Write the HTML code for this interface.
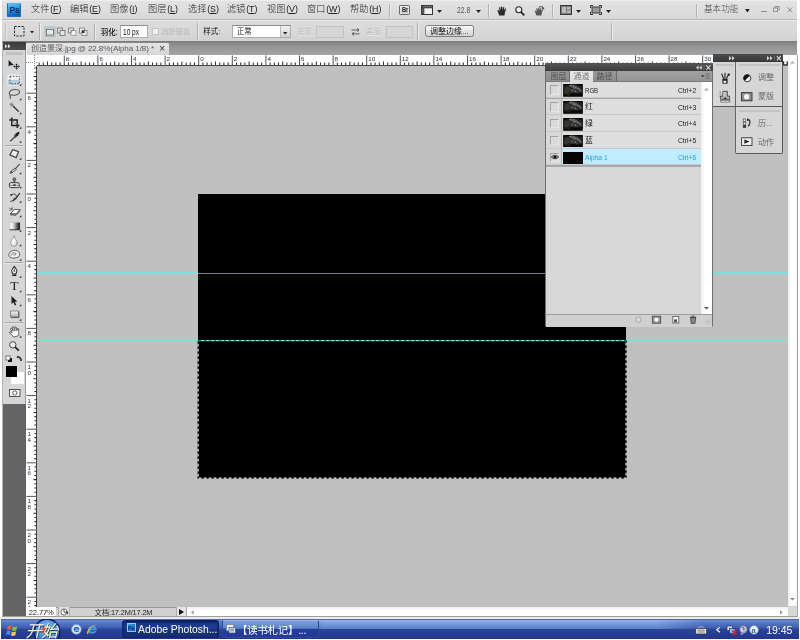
<!DOCTYPE html><html lang="zh"><head><meta charset="utf-8"><title>Adobe Photoshop</title><style>
*{margin:0;padding:0;box-sizing:border-box}
html,body{width:800px;height:640px;overflow:hidden;background:#fff}
body{position:relative;font-family:"Liberation Sans","Noto Sans CJK SC",sans-serif;font-size:10px;color:#222}
.a{position:absolute}
.t{position:absolute;white-space:nowrap;line-height:1}
.sep{position:absolute;width:2px;border-left:1px solid #b0b0b0;border-right:1px solid #ececec}
svg{position:absolute;overflow:visible}
</style></head><body><div id="root" style="position:absolute;left:0;top:0;width:800px;height:640px;will-change:transform">
<div class="a" style="left:2px;top:0px;width:795px;height:618px;background:#d4d4d4"></div>
<div class="a" id="menubar" style="left:2px;top:0px;width:795px;height:20px;background:linear-gradient(#f4f4f4 0,#e2e2e2 8%,#dedede 50%,#d8d8d8);border-bottom:1px solid #b8b8b8"></div>
<div class="a" id="optbar" style="left:2px;top:20px;width:795px;height:22px;background:linear-gradient(#dcdcdc,#d9d9d9 50%,#d2d2d2);border-top:1px solid #ececec;border-bottom:1px solid #7c7c7c"></div>
<div class="a" id="tabbar" style="left:2px;top:42px;width:795px;height:13px;background:linear-gradient(#848484,#969696 40%,#a4a4a4)"></div>
<div class="a" id="canvas" style="left:26px;top:55px;width:762px;height:552px;background:#c0c0c0"></div>
<div class="a" style="left:7px;top:3px;width:14.2px;height:14.2px;background:linear-gradient(165deg,#62c4fb,#2596ea 45%,#0f6cc8 75%,#0a56ae);border:1px solid #1a6cc0;border-top-color:#58b4f0;border-radius:1px"></div>
<div class="t" style="left:9.6px;top:6.2px;font-size:8.6px;color:#0a2858;font-weight:bold;letter-spacing:-0.3px">Ps</div>
<div class="t" style="left:31px;top:5px;font-size:9.2px;color:#222;font-weight:300">文件<span style="font-size:8.8px;letter-spacing:0;margin-left:0.8px;position:relative;top:0.2px">(<u>F</u>)</span></div>
<div class="t" style="left:70px;top:5px;font-size:9.2px;color:#222;font-weight:300">编辑<span style="font-size:8.8px;letter-spacing:0;margin-left:0.8px;position:relative;top:0.2px">(<u>E</u>)</span></div>
<div class="t" style="left:110px;top:5px;font-size:9.2px;color:#222;font-weight:300">图像<span style="font-size:8.8px;letter-spacing:0;margin-left:0.8px;position:relative;top:0.2px">(<u>I</u>)</span></div>
<div class="t" style="left:148px;top:5px;font-size:9.2px;color:#222;font-weight:300">图层<span style="font-size:8.8px;letter-spacing:0;margin-left:0.8px;position:relative;top:0.2px">(<u>L</u>)</span></div>
<div class="t" style="left:188px;top:5px;font-size:9.2px;color:#222;font-weight:300">选择<span style="font-size:8.8px;letter-spacing:0;margin-left:0.8px;position:relative;top:0.2px">(<u>S</u>)</span></div>
<div class="t" style="left:227px;top:5px;font-size:9.2px;color:#222;font-weight:300">滤镜<span style="font-size:8.8px;letter-spacing:0;margin-left:0.8px;position:relative;top:0.2px">(<u>T</u>)</span></div>
<div class="t" style="left:267px;top:5px;font-size:9.2px;color:#222;font-weight:300">视图<span style="font-size:8.8px;letter-spacing:0;margin-left:0.8px;position:relative;top:0.2px">(<u>V</u>)</span></div>
<div class="t" style="left:307px;top:5px;font-size:9.2px;color:#222;font-weight:300">窗口<span style="font-size:8.8px;letter-spacing:0;margin-left:0.8px;position:relative;top:0.2px">(<u>W</u>)</span></div>
<div class="t" style="left:350px;top:5px;font-size:9.2px;color:#222;font-weight:300">帮助<span style="font-size:8.8px;letter-spacing:0;margin-left:0.8px;position:relative;top:0.2px">(<u>H</u>)</span></div>
<div class="sep" style="left:389px;top:4px;height:13px"></div>
<div class="a" style="left:399.2px;top:5px;width:10.6px;height:9.8px;border:1px solid #6a6a6a;background:linear-gradient(#e6e6e6,#c2c2c2);border-radius:1.2px;box-shadow:inset 0 0 0 0.6px #f2f2f2"></div>
<div class="t" style="left:401.6px;top:7.3px;font-size:6.4px;color:#2a2a2a;font-weight:bold;letter-spacing:-0.3px;transform:scaleX(0.9);transform-origin:0 0">Br</div>
<svg style="left:421px;top:5px" width="12" height="10"><rect x="0.5" y="0.5" width="11" height="9" fill="#f0f0f0" stroke="#333"/><rect x="0.5" y="0.5" width="11" height="2.8" fill="#444"/><rect x="0.5" y="3" width="2.8" height="6.5" fill="#444"/><path d="M2.5,1.6h8.5" stroke="#aaa" stroke-width="0.8" stroke-dasharray="1,0.8"/><path d="M1.8,4v5" stroke="#aaa" stroke-width="0.8" stroke-dasharray="0.8,0.8"/></svg>
<svg style="left:437px;top:9.5px" width="5" height="3"><polygon points="0,0 5,0 2.5,3" fill="#222"/></svg>
<div class="t" style="left:457px;top:6px;font-size:8.5px;color:#555;transform:scaleX(0.8);transform-origin:0 0">22.8</div>
<svg style="left:476px;top:9.5px" width="5" height="3"><polygon points="0,0 5,0 2.5,3" fill="#222"/></svg>
<div class="sep" style="left:488px;top:4px;height:13px"></div>
<svg style="left:497px;top:5.5px" width="10" height="10" viewBox="0 0 10 10"><path d="M2.2,9.5 L1,6 L0.3,4.2 L1.2,3.8 L2.4,5.6 L2.2,1.2 L3.2,1 L3.8,4.2 L4.2,0.4 L5.3,0.4 L5.5,4.2 L6.3,0.9 L7.3,1.1 L7,4.6 L8.3,2.4 L9.2,2.8 L8,6.5 L7.4,9.5 Z" fill="#2a2a2a"/></svg>
<svg style="left:515px;top:5.5px" width="10" height="10" viewBox="0 0 10 10"><circle cx="3.8" cy="3.8" r="3" fill="#f0f0f0" stroke="#2a2a2a" stroke-width="1.1"/><path d="M6,6 L9.3,9.3" stroke="#2a2a2a" stroke-width="1.8"/></svg>
<svg style="left:534px;top:4.5px" width="11" height="11" viewBox="0 0 11 11"><path d="M2.5,10.5 L1.2,7.3 L0.6,5.8 L1.4,5.4 L2.5,6.8 L2.4,3.2 L3.3,3 L3.9,5.6 L4.4,2.6 L5.4,2.6 L5.6,5.6 L6.3,3.2 L7.2,3.4 L7,6 L8.1,4.6 L8.9,5 L7.9,7.8 L7.4,10.5 Z" fill="#555"/><path d="M5,1.8 A4,4 0 0 1 9.6,3.6" stroke="#555" stroke-width="1" fill="none"/><polygon points="8.6,0.8 10.6,4.6 7.6,4.2" fill="#555"/></svg>
<div class="sep" style="left:552px;top:4px;height:13px"></div>
<svg style="left:560px;top:5px" width="12" height="10"><rect x="0.5" y="0.5" width="11" height="9" fill="#777" stroke="#3a3a3a"/><rect x="2" y="2" width="4" height="6" fill="#bbb"/><rect x="7" y="2" width="3.5" height="2.5" fill="#bbb"/><rect x="7" y="5.5" width="3.5" height="2.5" fill="#bbb"/></svg>
<svg style="left:576px;top:9.5px" width="5" height="3"><polygon points="0,0 5,0 2.5,3" fill="#222"/></svg>
<svg style="left:590px;top:5px" width="12" height="10"><rect x="2" y="2" width="8" height="6" fill="#999" stroke="#3a3a3a"/><path d="M0.5,3 V0.5 H3 M9,0.5 H11.5 V3 M11.5,7 V9.5 H9 M3,9.5 H0.5 V7" stroke="#333" fill="none"/></svg>
<svg style="left:606px;top:9.5px" width="5" height="3"><polygon points="0,0 5,0 2.5,3" fill="#222"/></svg>
<div class="sep" style="left:696px;top:4px;height:13px"></div>
<div class="t" style="left:703.6px;top:5.3px;font-size:9px;color:#4a4a4a;transform:scaleX(0.955);transform-origin:0 0;font-weight:300">基本功能</div>
<svg style="left:745px;top:9.3px" width="4.8" height="3.4"><polygon points="0,0 4.8,0 2.4,3.4" fill="#222"/></svg>
<div class="a" style="left:761px;top:11px;width:6px;height:1.4px;background:#8a8a8a"></div>
<svg style="left:773.4px;top:6.4px" width="7" height="6"><rect x="0.4" y="2" width="4.2" height="3.4" fill="none" stroke="#8a8a8a" stroke-width="0.9"/><path d="M1.8,1.8 V0.5 H6.2 V3.8 H4.8" fill="none" stroke="#8a8a8a" stroke-width="0.9"/></svg>
<svg style="left:787.3px;top:7px" width="6" height="6"><path d="M0.4,0.4 L5.4,5.4 M5.4,0.4 L0.4,5.4" stroke="#8e8e8e" stroke-width="1"/></svg>
<div class="a" style="left:5.3px;top:23px;width:2px;height:17px;background:#e4e4e4;border-left:0.8px solid #c4c4c4"></div>
<svg style="left:14px;top:26px" width="11" height="11"><rect x="0.5" y="0.5" width="9.5" height="9.5" fill="none" stroke="#222" stroke-width="1" stroke-dasharray="2.2,1.3"/></svg>
<svg style="left:30px;top:30.5px" width="4" height="2.5"><polygon points="0,0 4,0 2.0,2.5" fill="#222"/></svg>
<div class="sep" style="left:39px;top:23px;height:17px"></div>
<svg style="left:45px;top:26.5px" width="44" height="10"><rect x="0" y="0" width="10" height="9.5" fill="#b9d1dc" stroke="#8fa9b5" stroke-width="0.6"/><rect x="1.5" y="2.5" width="7" height="5.5" fill="#e9e9e9" stroke="#6a6a6a" stroke-width="0.8"/><rect x="12.5" y="1" width="5" height="5" fill="#e4e4e4" stroke="#6a6a6a" stroke-width="0.8"/><rect x="15" y="3.5" width="5" height="5" fill="#e4e4e4" stroke="#6a6a6a" stroke-width="0.8"/><rect x="26" y="3.5" width="5" height="5" fill="#f4f4f4" stroke="#999" stroke-width="0.8"/><path d="M23.5,6 V1 H28.5 V3.5 H26 V6 Z" fill="#e4e4e4" stroke="#6a6a6a" stroke-width="0.8"/><rect x="34.5" y="1" width="5" height="5" fill="#eee" stroke="#777" stroke-width="0.8"/><rect x="37" y="3.5" width="5" height="5" fill="#eee" stroke="#777" stroke-width="0.8"/><rect x="37" y="3.5" width="2.5" height="2.5" fill="#333"/></svg>
<div class="sep" style="left:94px;top:23px;height:17px"></div>
<div class="t" style="left:100.7px;top:27.5px;font-size:7.5px;color:#111;font-weight:500;transform:scaleY(1.12);transform-origin:0 0">羽化:</div>
<div class="a" style="left:119.5px;top:25.3px;width:28px;height:12.4px;background:#fff;border:1px solid #adadad;border-top-color:#8c8c8c"></div>
<div class="t" style="left:122.8px;top:28px;font-size:8.4px;color:#111;transform:scaleX(0.78);transform-origin:0 0">10 px</div>
<div class="a" style="left:152px;top:28.3px;width:7px;height:7px;background:#efefef;border:1px solid #c4c4c4"></div>
<div class="t" style="left:161px;top:28px;font-size:7.3px;color:#b8b8b8;">消除锯齿</div>
<div class="sep" style="left:197px;top:23px;height:17px"></div>
<div class="t" style="left:203.2px;top:28px;font-size:7.5px;color:#111;transform:scaleY(1.08);transform-origin:0 0">样式:</div>
<div class="a" style="left:232.4px;top:25.4px;width:59px;height:12.5px;background:#fff;border:1px solid #adadad;border-top-color:#8c8c8c"></div>
<div class="t" style="left:237px;top:28.2px;font-size:7.3px;color:#111;transform:scaleY(1.06);transform-origin:0 0">正常</div>
<div class="a" style="left:280px;top:26.4px;width:10.4px;height:10.5px;background:linear-gradient(#f4f4f4,#d0d0d0);border-left:1px solid #bbb"></div>
<svg style="left:283px;top:31.5px" width="4.4" height="2.6"><polygon points="0,0 4.4,0 2.2,2.6" fill="#222"/></svg>
<div class="t" style="left:297.2px;top:28px;font-size:7.4px;color:#bcbcbc;text-shadow:0.5px 0.5px 0 #eee">宽度:</div>
<div class="a" style="left:316px;top:25.5px;width:27.5px;height:12.2px;background:#d6d6d6;border:1px solid #c2c2c2"></div>
<svg style="left:350.5px;top:27.5px" width="9" height="8"><path d="M0.5,2 H8 M6,0.3 L8,2 L6,3.7 M8.5,5.8 H1 M3,4.1 L1,5.8 L3,7.5" stroke="#555" fill="none" stroke-width="0.9"/></svg>
<div class="t" style="left:366.3px;top:28px;font-size:7.4px;color:#bcbcbc;text-shadow:0.5px 0.5px 0 #eee">高度:</div>
<div class="a" style="left:385.6px;top:25.5px;width:27px;height:12.2px;background:#d6d6d6;border:1px solid #c2c2c2"></div>
<div class="sep" style="left:417px;top:23px;height:17px"></div>
<div class="a" style="left:424.5px;top:25px;width:49.5px;height:11.5px;background:linear-gradient(#fbfbfb,#e4e4e4 50%,#d2d2d2);border:1px solid #7e7e7e;border-radius:2.5px"></div>
<div class="t" style="left:430px;top:27.6px;font-size:8px;color:#111;">调整边缘...</div>
<div class="sep" style="left:611px;top:23px;height:17px"></div>
<div class="a" style="left:26px;top:43px;width:143px;height:12px;background:linear-gradient(#e4e4e4,#d6d6d6);border-radius:1px 1px 0 0;border-left:1px solid #eee"></div>
<div class="t" style="left:31px;top:44.8px;font-size:8.05px;color:#5a5a5a;letter-spacing:-0.08px">创造景深.jpg @ 22.8%(Alpha 1/8) *</div>
<div class="t" style="left:159.3px;top:43.6px;font-size:10px;color:#333;">×</div>
<div class="a" style="left:26px;top:55px;width:762px;height:10.6px;background:#fff;border-bottom:1.3px solid #444"></div>
<div class="a" style="left:26px;top:55px;width:11.2px;height:552px;background:#fff;border-right:1.3px solid #444"></div>
<div class="a" style="left:26px;top:55px;width:11px;height:10.5px;background:#fff"></div>
<div class="a" style="left:26px;top:62px;width:11px;height:1px;background:repeating-linear-gradient(90deg,#888 0 1px,#fff 1px 2px)"></div>
<div class="a" style="left:34px;top:55px;width:1px;height:10.5px;background:repeating-linear-gradient(#888 0 1px,#fff 1px 2px)"></div>
<svg style="left:0;top:0" width="800" height="640" font-family="Liberation Sans, sans-serif" font-size="6.2" fill="#2a3246"><path d="M64.3,55.5V65M97.9,55.5V65M131.5,55.5V65M165.1,55.5V65M198.7,55.5V65M232.3,55.5V65M265.9,55.5V65M299.5,55.5V65M333.1,55.5V65M366.7,55.5V65M400.3,55.5V65M433.9,55.5V65M467.5,55.5V65M501.1,55.5V65M534.7,55.5V65M568.3,55.5V65M601.9,55.5V65M635.5,55.5V65M669.1,55.5V65M702.7,55.5V65M26.5,93.2H37M26.5,126.8H37M26.5,160.4H37M26.5,194.0H37M26.5,227.6H37M26.5,261.2H37M26.5,294.8H37M26.5,328.4H37M26.5,362.0H37M26.5,395.6H37M26.5,429.2H37M26.5,462.8H37M26.5,496.4H37M26.5,530.0H37M26.5,563.6H37M26.5,597.2H37" stroke="#555" stroke-width="1" fill="none"/><path d="M39.1,62.4V65M43.3,62.4V65M47.5,61.4V65M51.7,62.4V65M55.9,62.4V65M60.1,62.4V65M68.5,62.4V65M72.7,62.4V65M76.9,62.4V65M81.1,61.4V65M85.3,62.4V65M89.5,62.4V65M93.7,62.4V65M102.1,62.4V65M106.3,62.4V65M110.5,62.4V65M114.7,61.4V65M118.9,62.4V65M123.1,62.4V65M127.3,62.4V65M135.7,62.4V65M139.9,62.4V65M144.1,62.4V65M148.3,61.4V65M152.5,62.4V65M156.7,62.4V65M160.9,62.4V65M169.3,62.4V65M173.5,62.4V65M177.7,62.4V65M181.9,61.4V65M186.1,62.4V65M190.3,62.4V65M194.5,62.4V65M202.9,62.4V65M207.1,62.4V65M211.3,62.4V65M215.5,61.4V65M219.7,62.4V65M223.9,62.4V65M228.1,62.4V65M236.5,62.4V65M240.7,62.4V65M244.9,62.4V65M249.1,61.4V65M253.3,62.4V65M257.5,62.4V65M261.7,62.4V65M270.1,62.4V65M274.3,62.4V65M278.5,62.4V65M282.7,61.4V65M286.9,62.4V65M291.1,62.4V65M295.3,62.4V65M303.7,62.4V65M307.9,62.4V65M312.1,62.4V65M316.3,61.4V65M320.5,62.4V65M324.7,62.4V65M328.9,62.4V65M337.3,62.4V65M341.5,62.4V65M345.7,62.4V65M349.9,61.4V65M354.1,62.4V65M358.3,62.4V65M362.5,62.4V65M370.9,62.4V65M375.1,62.4V65M379.3,62.4V65M383.5,61.4V65M387.7,62.4V65M391.9,62.4V65M396.1,62.4V65M404.5,62.4V65M408.7,62.4V65M412.9,62.4V65M417.1,61.4V65M421.3,62.4V65M425.5,62.4V65M429.7,62.4V65M438.1,62.4V65M442.3,62.4V65M446.5,62.4V65M450.7,61.4V65M454.9,62.4V65M459.1,62.4V65M463.3,62.4V65M471.7,62.4V65M475.9,62.4V65M480.1,62.4V65M484.3,61.4V65M488.5,62.4V65M492.7,62.4V65M496.9,62.4V65M505.3,62.4V65M509.5,62.4V65M513.7,62.4V65M517.9,61.4V65M522.1,62.4V65M526.3,62.4V65M530.5,62.4V65M538.9,62.4V65M543.1,62.4V65M547.3,62.4V65M551.5,61.4V65M555.7,62.4V65M559.9,62.4V65M564.1,62.4V65M572.5,62.4V65M576.7,62.4V65M580.9,62.4V65M585.1,61.4V65M589.3,62.4V65M593.5,62.4V65M597.7,62.4V65M606.1,62.4V65M610.3,62.4V65M614.5,62.4V65M618.7,61.4V65M622.9,62.4V65M627.1,62.4V65M631.3,62.4V65M639.7,62.4V65M643.9,62.4V65M648.1,62.4V65M652.3,61.4V65M656.5,62.4V65M660.7,62.4V65M664.9,62.4V65M673.3,62.4V65M677.5,62.4V65M681.7,62.4V65M685.9,61.4V65M690.1,62.4V65M694.3,62.4V65M698.5,62.4V65M706.9,62.4V65M711.1,62.4V65M34.4,68.0H37M34.4,72.2H37M33.4,76.4H37M34.4,80.6H37M34.4,84.8H37M34.4,89.0H37M34.4,97.4H37M34.4,101.6H37M34.4,105.8H37M33.4,110.0H37M34.4,114.2H37M34.4,118.4H37M34.4,122.6H37M34.4,131.0H37M34.4,135.2H37M34.4,139.4H37M33.4,143.6H37M34.4,147.8H37M34.4,152.0H37M34.4,156.2H37M34.4,164.6H37M34.4,168.8H37M34.4,173.0H37M33.4,177.2H37M34.4,181.4H37M34.4,185.6H37M34.4,189.8H37M34.4,198.2H37M34.4,202.4H37M34.4,206.6H37M33.4,210.8H37M34.4,215.0H37M34.4,219.2H37M34.4,223.4H37M34.4,231.8H37M34.4,236.0H37M34.4,240.2H37M33.4,244.4H37M34.4,248.6H37M34.4,252.8H37M34.4,257.0H37M34.4,265.4H37M34.4,269.6H37M34.4,273.8H37M33.4,278.0H37M34.4,282.2H37M34.4,286.4H37M34.4,290.6H37M34.4,299.0H37M34.4,303.2H37M34.4,307.4H37M33.4,311.6H37M34.4,315.8H37M34.4,320.0H37M34.4,324.2H37M34.4,332.6H37M34.4,336.8H37M34.4,341.0H37M33.4,345.2H37M34.4,349.4H37M34.4,353.6H37M34.4,357.8H37M34.4,366.2H37M34.4,370.4H37M34.4,374.6H37M33.4,378.8H37M34.4,383.0H37M34.4,387.2H37M34.4,391.4H37M34.4,399.8H37M34.4,404.0H37M34.4,408.2H37M33.4,412.4H37M34.4,416.6H37M34.4,420.8H37M34.4,425.0H37M34.4,433.4H37M34.4,437.6H37M34.4,441.8H37M33.4,446.0H37M34.4,450.2H37M34.4,454.4H37M34.4,458.6H37M34.4,467.0H37M34.4,471.2H37M34.4,475.4H37M33.4,479.6H37M34.4,483.8H37M34.4,488.0H37M34.4,492.2H37M34.4,500.6H37M34.4,504.8H37M34.4,509.0H37M33.4,513.2H37M34.4,517.4H37M34.4,521.6H37M34.4,525.8H37M34.4,534.2H37M34.4,538.4H37M34.4,542.6H37M33.4,546.8H37M34.4,551.0H37M34.4,555.2H37M34.4,559.4H37M34.4,567.8H37M34.4,572.0H37M34.4,576.2H37M33.4,580.4H37M34.4,584.6H37M34.4,588.8H37M34.4,593.0H37M34.4,601.4H37M34.4,605.6H37" stroke="#303030" stroke-width="1.05" fill="none"/><text x="65.8" y="61.3">8</text><text x="99.4" y="61.3">6</text><text x="133.0" y="61.3">4</text><text x="166.6" y="61.3">2</text><text x="200.2" y="61.3">0</text><text x="233.8" y="61.3">2</text><text x="267.4" y="61.3">4</text><text x="301.0" y="61.3">6</text><text x="334.6" y="61.3">8</text><text x="368.2" y="61.3">10</text><text x="401.8" y="61.3">12</text><text x="435.4" y="61.3">14</text><text x="469.0" y="61.3">16</text><text x="502.6" y="61.3">18</text><text x="536.2" y="61.3">20</text><text x="569.8" y="61.3">22</text><text x="603.4" y="61.3">24</text><text x="637.0" y="61.3">26</text><text x="670.6" y="61.3">28</text><text x="704.2" y="61.3">30</text><text x="27.4" y="100.2">6</text><text x="27.4" y="133.8">4</text><text x="27.4" y="167.4">2</text><text x="27.4" y="201.0">0</text><text x="27.4" y="234.6">2</text><text x="27.4" y="268.2">4</text><text x="27.4" y="301.8">6</text><text x="27.4" y="335.4">8</text><text x="27.4" y="369.0">1</text><text x="27.4" y="374.6">0</text><text x="27.4" y="402.6">1</text><text x="27.4" y="408.2">2</text><text x="27.4" y="436.2">1</text><text x="27.4" y="441.8">4</text><text x="27.4" y="469.8">1</text><text x="27.4" y="475.4">6</text><text x="27.4" y="503.4">1</text><text x="27.4" y="509.0">8</text><text x="27.4" y="537.0">2</text><text x="27.4" y="542.6">0</text><text x="27.4" y="570.6">2</text><text x="27.4" y="576.2">2</text><text x="27.4" y="604.2">2</text><text x="27.4" y="609.8">4</text></svg>
<div class="a" id="img" style="left:198px;top:194px;width:428px;height:284px;background:#000"></div>
<div class="a" style="left:37px;top:272.3px;width:751px;height:1.4px;background:#7fdede"></div>
<div class="a" style="left:198px;top:272.3px;width:428px;height:1.4px;background:#000"></div>
<div class="a" style="left:198px;top:272.5px;width:428px;height:1px;background:#4a9696"></div>
<div class="a" style="left:37px;top:340px;width:751px;height:1.4px;background:#7fdede"></div>
<svg style="left:0;top:0" width="800" height="640"><rect x="198.1" y="340.7" width="428" height="137.4" fill="none" stroke="#000" stroke-width="1.2"/><rect x="198.1" y="340.7" width="428" height="137.4" fill="none" stroke="#ececec" stroke-width="1.2" stroke-dasharray="2.8,2.2"/><path d="M198.1,340.7H626.1" stroke="#000" stroke-width="1.6"/><path d="M198.1,340.6H626.1" stroke="#3f8888" stroke-width="1"/><path d="M201,340.6H626.1" stroke="#a4f0f0" stroke-width="1" stroke-dasharray="3,2"/></svg>
<div class="a" style="left:2px;top:42px;width:1px;height:576px;background:#b4b4b4"></div>
<div class="a" style="left:3px;top:42px;width:23px;height:8px;background:linear-gradient(#3a3a3a,#4c4c4c)"></div>
<svg style="left:5px;top:44px" width="6" height="5"><path d="M0,0 L2.5,2.2 L0,4.4Z M3,0 L5.5,2.2 L3,4.4Z" fill="#d8d8d8"/></svg>
<div class="a" style="left:3px;top:50px;width:23px;height:354px;background:#d6d6d6;border-right:1px solid #9a9a9a"></div>
<div class="a" style="left:3px;top:404px;width:23px;height:214px;background:#646464"></div>
<div class="a" style="left:6px;top:52px;width:17px;height:2.5px;background:#c2c2c2"></div>
<div class="a" style="left:5px;top:144.8px;width:18px;height:1px;background:#a8a8a8;box-shadow:0 1px 0 #e4e4e4"></div>
<div class="a" style="left:5px;top:262.2px;width:18px;height:1px;background:#a8a8a8;box-shadow:0 1px 0 #e4e4e4"></div>
<div class="a" style="left:5px;top:322.4px;width:18px;height:1px;background:#a8a8a8;box-shadow:0 1px 0 #e4e4e4"></div>
<div class="a" style="left:7.1px;top:74px;width:14px;height:11.6px;background:linear-gradient(#f6f7f8,#eef1f3 46%,#b2ccd8 50%,#bdd4de);border:0.5px solid #dfe6ea"></div>
<svg style="left:0;top:0" width="40" height="420"><polygon points="21.3,83.7 21.3,85.7 19.3,85.7" fill="#111"/><polygon points="21.3,98.2 21.3,100.2 19.3,100.2" fill="#111"/><polygon points="21.3,112.2 21.3,114.2 19.3,114.2" fill="#111"/><polygon points="21.3,126.7 21.3,128.7 19.3,128.7" fill="#111"/><polygon points="21.3,140.7 21.3,142.7 19.3,142.7" fill="#111"/><polygon points="21.3,157.7 21.3,159.7 19.3,159.7" fill="#111"/><polygon points="21.3,172.2 21.3,174.2 19.3,174.2" fill="#111"/><polygon points="21.3,186.2 21.3,188.2 19.3,188.2" fill="#111"/><polygon points="21.3,200.7 21.3,202.7 19.3,202.7" fill="#111"/><polygon points="21.3,215.2 21.3,217.2 19.3,217.2" fill="#111"/><polygon points="21.3,229.7 21.3,231.7 19.3,231.7" fill="#111"/><polygon points="21.3,244.2 21.3,246.2 19.3,246.2" fill="#111"/><polygon points="21.3,258.7 21.3,260.7 19.3,260.7" fill="#111"/><polygon points="21.3,275.7 21.3,277.7 19.3,277.7" fill="#111"/><polygon points="21.3,290.2 21.3,292.2 19.3,292.2" fill="#111"/><polygon points="21.3,304.2 21.3,306.2 19.3,306.2" fill="#111"/><polygon points="21.3,318.7 21.3,320.7 19.3,320.7" fill="#111"/><polygon points="21.3,335.7 21.3,337.7 19.3,337.7" fill="#111"/><path d="M8.6,60 L8.6,66.6 L10.3,65.2 L14,65.2 Z" fill="#1e1e1e"/><path d="M16.6,64.6 v4 M14.6,66.6 h4" stroke="#1e1e1e" stroke-width="0.9"/><path d="M16.6,63.4 l1.3,1.5h-2.6z M16.6,69.8 l1.3,-1.5h-2.6z M13.4,66.6 l1.5,-1.3v2.6z M19.8,66.6 l-1.5,-1.3v2.6z" fill="#1e1e1e"/><rect x="10" y="76.3" width="9.4" height="7.4" fill="none" stroke="#3a4650" stroke-width="0.9" stroke-dasharray="1.6,1.3"/><path d="M9.5,94.5 C8.5,91 12,89.3 15.5,89.5 C19,89.7 20.3,91.3 19.3,93 C18.3,94.8 14.5,95.8 11.5,95 C9.7,94.6 9.2,95.8 10.3,96.6 C11,97.2 10.3,98.2 9.6,98.4" fill="none" stroke="#555" stroke-width="1.1"/><path d="M13,106 L18.7,111.7" stroke="#1e1e1e" stroke-width="1.2"/><path d="M11.7,102.4v4.4 M9.5,104.6h4.4 M10.1,103l3.2,3.2 M13.3,103l-3.2,3.2" stroke="#6a6a6a" stroke-width="0.6"/><path d="M11.8,117.5 V125.5 H19.5 M9.3,120 H17.2 V128" fill="none" stroke="#1e1e1e" stroke-width="1.4"/><path d="M10,118.4 L18.8,127" stroke="#555" stroke-width="0.6"/><path d="M10.2,141.4 L15,136.6" stroke="#333" stroke-width="1.2"/><path d="M14.6,137 L17.4,134.2" stroke="#444" stroke-width="2.6"/><path d="M15.6,133.6 L17.9,135.9" stroke="#1e1e1e" stroke-width="1.2"/><path d="M17,134.4 L18.4,133" stroke="#1e1e1e" stroke-width="2.2" stroke-linecap="round"/><path d="M12.7,149.7 L18.5,151.7 L16.2,157.7 L9.9,154.9 Z" fill="#f2f2f2" stroke="#4a4a4a" stroke-width="1.3" stroke-linejoin="round"/><path d="M19.6,164 L15.2,169" stroke="#3a3a3a" stroke-width="1.1"/><path d="M15.2,168.2 L16.3,169.5 L12.2,172.6 L10,173.2 L11.4,170.8 Z" fill="#dcdcdc" stroke="#3a3a3a" stroke-width="0.8" stroke-linejoin="round"/><path d="M10,173.2 L11.4,170.8 L12.4,172.4Z" fill="#333"/><circle cx="14.3" cy="179.2" r="1.9" fill="#6a6a6a"/><rect x="13.4" y="180.4" width="1.9" height="2.6" fill="#555"/><rect x="9.4" y="182.7" width="9.8" height="4.9" rx="1.3" fill="#e6e6e6" stroke="#3a3a3a" stroke-width="1"/><path d="M9.8,185.4 h9" stroke="#555" stroke-width="0.6"/><path d="M12.6,184.4 h3.6 l-1.8,1.9Z" fill="#111"/><path d="M19.8,193.2 L15.2,199.4" stroke="#2a2a2a" stroke-width="1.1"/><path d="M15.6,198.4 L13.2,201.2 L14,198.2 Z" fill="#333" stroke="#333" stroke-width="0.7"/><path d="M11.4,195.4 C12.6,193.6 15.4,193.4 16.2,195.6 C17,198 14.6,200.8 10.2,201.4" fill="none" stroke="#3a3a3a" stroke-width="1"/><path d="M10.2,194 l2.6,0.4 l-1.8,2.2Z" fill="#222"/><path d="M10.5,213.6 L10.5,215 L16,215.3 L20,211.2 L20,209.7 L16,213.9 Z" fill="#8a8a8a" stroke="#444" stroke-width="0.6" stroke-linejoin="round"/><path d="M10.5,213.6 L14.6,209.4 L20,209.7 L16,213.9 Z" fill="#fafafa" stroke="#444" stroke-width="0.8" stroke-linejoin="round"/><path d="M9,208 l4.4,1.6 M12.6,206.6 l-1.6,4.4 M9.2,210.6 l3.6,-2.4" stroke="#555" stroke-width="0.6"/><defs><linearGradient id="gr1" x1="0" x2="1"><stop offset="0" stop-color="#fff"/><stop offset="0.35" stop-color="#e2e2e2"/><stop offset="1" stop-color="#0c0c0c"/></linearGradient><linearGradient id="gr2" x1="0" x2="0" y1="0" y2="1"><stop offset="0" stop-color="#fafafa"/><stop offset="1" stop-color="#aaa"/></linearGradient></defs><rect x="9.6" y="222.4" width="10" height="7.4" fill="url(#gr1)"/><path d="M9.6,229.8 H19.6 V222.4" fill="none" stroke="#222" stroke-width="0.9"/><path d="M9.6,229.8 V222.4 H19.6" fill="none" stroke="#bbb" stroke-width="0.6"/><defs><radialGradient id="gr3" cx="0.42" cy="0.55" r="0.6"><stop offset="0" stop-color="#fff"/><stop offset="0.55" stop-color="#e8e8e8"/><stop offset="1" stop-color="#9a9a9a"/></radialGradient></defs><path d="M14,235.4 C14,237.6 10.6,240.6 10.6,243 A3.4,3.4 0 0 0 17.4,243 C17.4,240.6 14,237.6 14,235.4 Z" fill="url(#gr3)" stroke="#8a8a8a" stroke-width="0.6"/><path d="M9,256 C8,253 11,250.5 14.5,250.3 C18,250.1 20,252.4 19.6,255 C19.3,257.4 16,258.4 12.6,258 C10.6,257.8 9.4,257.2 9,256 Z" fill="#eee" stroke="#555" stroke-width="0.9"/><path d="M11.2,255.6 C11,253.6 13,252.4 14.8,252.8 C16.2,253.2 16.2,254.8 14.8,255 C13.8,255.1 13.4,254.4 14,253.9" fill="none" stroke="#555" stroke-width="0.7"/><path d="M14.3,266 L17,270.5 L16,274 L12.6,274 L11.6,270.5 Z" fill="#f2f2f2" stroke="#1e1e1e" stroke-width="1"/><circle cx="14.3" cy="271" r="0.8" fill="#1e1e1e"/><path d="M14.3,266 V270.3" stroke="#1e1e1e" stroke-width="0.6"/><rect x="12.3" y="274.6" width="4" height="1.4" fill="#1e1e1e"/><text x="10.3" y="290.2" font-family="Liberation Serif, serif" font-size="13.5" fill="#1e1e1e">T</text><path d="M11.5,296 L11.5,304 L13.4,302.3 L14.9,305.4 L16.2,304.8 L14.8,301.8 L17.3,301.6 Z" fill="#1e1e1e"/><rect x="10.5" y="311" width="8" height="6" fill="url(#gr2)" stroke="#777" stroke-width="0.8"/><path d="M11,317.6 h8 v-6" fill="none" stroke="#555" stroke-width="0.9"/><g transform="rotate(-16 14 332)"><path d="M12.2,336.8 L10.6,333.2 L9.2,331.2 L10.2,330.5 L12,332.4 L11.6,327.8 L12.8,327.6 L13.5,331 L13.8,326.8 L15.1,326.8 L15.3,331 L16.2,327.4 L17.4,327.7 L17.1,331.6 L18.4,329.6 L19.4,330.1 L18.3,333.8 L17.7,336.8 Z" fill="#fdfdfd" stroke="#555" stroke-width="0.8" stroke-linejoin="round"/></g><circle cx="12.8" cy="344.8" r="3.2" fill="#eee" stroke="#444" stroke-width="1"/><path d="M15.2,347.2 L18.8,350.6" stroke="#1e1e1e" stroke-width="1.7"/><rect x="8" y="358" width="4" height="4" fill="#111"/><rect x="6" y="356" width="4" height="4" fill="#fff" stroke="#333" stroke-width="0.6"/><path d="M17.6,357 C19.6,357 21,358.4 21,360.4" fill="none" stroke="#2a2a2a" stroke-width="1.4"/><path d="M18.2,355.6 l-1.8,1.4 l1.8,1.4Z M19.6,359.6 l1.4,1.8 l1.4,-1.8Z" fill="#333"/></svg>
<div class="a" style="left:11.2px;top:372px;width:12.6px;height:12px;background:#fff"></div>
<div class="a" style="left:5.7px;top:365.8px;width:11.3px;height:11.3px;background:#000"></div>
<svg style="left:8.5px;top:389px" width="12" height="8"><rect x="0.5" y="0.5" width="10.5" height="7" fill="#f4f4f4" stroke="#444" stroke-width="0.9"/><circle cx="5.8" cy="4" r="2.1" fill="#fff" stroke="#444" stroke-width="0.8"/></svg>
<div class="a" style="left:545px;top:63px;width:167.6px;height:264.3px;background:#d8d8d8;border:1px solid #6e6e6e;border-top:none;border-radius:0 0 2px 2px"></div>
<div class="a" style="left:545.3px;top:63.3px;width:167.3px;height:7.6px;background:linear-gradient(#565656,#3c3c3c);border-radius:2px 2px 0 0"></div>
<svg style="left:696px;top:64.5px" width="16" height="6"><path d="M2.6,0.3 L0,2.7 L2.6,5.1Z M5.8,0.3 L3.2,2.7 L5.8,5.1Z" fill="#d0d0d0"/><path d="M8,0 V5.4" stroke="#777" stroke-width="0.8"/><path d="M10.2,0.4 L14.4,5 M14.4,0.4 L10.2,5" stroke="#e0e0e0" stroke-width="1.1"/></svg>
<div class="a" style="left:546px;top:70.8px;width:166px;height:10.8px;background:linear-gradient(#a2a2a2,#949494);border-bottom:1px solid #7a7a7a"></div>
<div class="a" style="left:546px;top:70.8px;width:24px;height:10.4px;background:linear-gradient(#989898,#8c8c8c);border-right:1px solid #707070"></div>
<div class="a" style="left:593px;top:70.8px;width:23.5px;height:10.4px;background:linear-gradient(#989898,#8c8c8c);border-right:1px solid #6a6a6a"></div>
<div class="a" style="left:570px;top:70.6px;width:23.2px;height:11.2px;background:linear-gradient(#e8e8e8,#dcdcdc)"></div>
<div class="t" style="left:550.5px;top:72.6px;font-size:8px;color:#505050;">图层</div>
<div class="t" style="left:573.5px;top:72.6px;font-size:8px;color:#7e7e7e;">通道</div>
<div class="t" style="left:596.5px;top:72.6px;font-size:8px;color:#505050;">路径</div>
<svg style="left:701px;top:73px" width="10" height="7"><path d="M0,2.2 h3.4 l-1.7,2Z" fill="#333"/><path d="M4.4,0.6h4.6M4.4,2.2h4.6M4.4,3.8h4.6M4.4,5.4h4.6" stroke="#777" stroke-width="0.9"/></svg>
<svg width="0" height="0" style="left:0;top:0"><defs><filter id="tb" x="-10%" y="-10%" width="120%" height="120%"><feGaussianBlur stdDeviation="0.45"/></filter></defs></svg>
<div class="a" style="left:546px;top:81.6px;width:155px;height:16.9px;background:#d8d8d8"></div>
<div class="a" style="left:562px;top:81.6px;width:139px;height:16.9px;background:#dedede"></div>
<div class="a" style="left:561.3px;top:81.6px;width:1px;height:16.9px;background:#b4b4b4"></div>
<div class="a" style="left:549.8px;top:84.89999999999999px;width:9.4px;height:9.8px;background:#dadada;border:1px solid #e6e6e6;border-top-color:#a2a2a2;border-left-color:#a2a2a2"></div>
<svg style="left:563.2px;top:84.0px;overflow:hidden" width="20" height="12.8" viewBox="0 0 20 13"><rect width="20" height="13" fill="#080808"/><g filter="url(#tb)"><path d="M0.5,8.5 L1,2 L6,0.8 L12,0.5 L19.5,2 L19.5,9 L15,10 L9,9.2 L4,10.5Z" fill="#222220"/><path d="M0.8,9 L2.2,3.2 L5.5,2.2 L8.5,5.5 L6,8.5 L3,10.2Z" fill="#343432"/><path d="M5.5,1.6 L9,0.6 L13,1.8 L17,4.2 L19.5,7.5 L17.5,8.2 L14,5.6 L10.5,4.8 L8,3.6Z" fill="#4e4e4c"/><path d="M7,6.8 L10,5.4 L13.5,6.4 L16.5,8.4 L14,9.4 L10.5,8.6 L8,9.4Z" fill="#383836"/><path d="M6.5,1.8 L8.6,1 M9.6,2.4 L11.4,1.8 M12,3.4 L13.6,3 M14.4,4.6 L15.8,4.2 M16.6,6 L17.8,5.8 M10.6,3.8 l1,0.4 M8.4,6.4 l1.4,-0.4 M11.6,7 l1.6,0.4" stroke="#a4a4a0" stroke-width="0.8" fill="none"/><path d="M1.5,10.5 L6,9.2 L9,10.4 L5,12Z" fill="#2a2c1a"/></g></svg>
<div class="t" style="left:585.3px;top:86.6px;font-size:7.6px;color:#222;transform:scaleX(0.8);transform-origin:0 0">RGB</div>
<div class="t" style="left:677.5px;top:86.6px;font-size:7.5px;color:#222;transform:scaleX(0.9);transform-origin:0 0">Ctrl+2</div>
<div class="a" style="left:546px;top:97.8px;width:155px;height:1.2px;background:#a8a8a8;box-shadow:0 -0.8px 0 #c4c4c4"></div>
<div class="a" style="left:546px;top:98.5px;width:155px;height:16.9px;background:#d8d8d8"></div>
<div class="a" style="left:562px;top:98.5px;width:139px;height:16.9px;background:#dedede"></div>
<div class="a" style="left:561.3px;top:98.5px;width:1px;height:16.9px;background:#b4b4b4"></div>
<div class="a" style="left:549.8px;top:101.8px;width:9.4px;height:9.8px;background:#dadada;border:1px solid #e6e6e6;border-top-color:#a2a2a2;border-left-color:#a2a2a2"></div>
<svg style="left:563.2px;top:100.9px;overflow:hidden" width="20" height="12.8" viewBox="0 0 20 13"><rect width="20" height="13" fill="#080808"/><g filter="url(#tb)"><path d="M0.5,8.5 L1,2 L6,0.8 L12,0.5 L19.5,2 L19.5,9 L15,10 L9,9.2 L4,10.5Z" fill="#222220"/><path d="M0.8,9 L2.2,3.2 L5.5,2.2 L8.5,5.5 L6,8.5 L3,10.2Z" fill="#343432"/><path d="M5.5,1.6 L9,0.6 L13,1.8 L17,4.2 L19.5,7.5 L17.5,8.2 L14,5.6 L10.5,4.8 L8,3.6Z" fill="#4e4e4c"/><path d="M7,6.8 L10,5.4 L13.5,6.4 L16.5,8.4 L14,9.4 L10.5,8.6 L8,9.4Z" fill="#383836"/><path d="M6.5,1.8 L8.6,1 M9.6,2.4 L11.4,1.8 M12,3.4 L13.6,3 M14.4,4.6 L15.8,4.2 M16.6,6 L17.8,5.8 M10.6,3.8 l1,0.4 M8.4,6.4 l1.4,-0.4 M11.6,7 l1.6,0.4" stroke="#a4a4a0" stroke-width="0.8" fill="none"/><path d="M1.5,10.5 L6,9.2 L9,10.4 L5,12Z" fill="#1c1c1c"/></g></svg>
<div class="t" style="left:585px;top:103.3px;font-size:7.8px;color:#222;">红</div>
<div class="t" style="left:677.5px;top:103.5px;font-size:7.5px;color:#222;transform:scaleX(0.9);transform-origin:0 0">Ctrl+3</div>
<div class="a" style="left:546px;top:114.7px;width:155px;height:1.2px;background:#a8a8a8;box-shadow:0 -0.8px 0 #c4c4c4"></div>
<div class="a" style="left:546px;top:115.39999999999999px;width:155px;height:16.9px;background:#d8d8d8"></div>
<div class="a" style="left:562px;top:115.39999999999999px;width:139px;height:16.9px;background:#dedede"></div>
<div class="a" style="left:561.3px;top:115.39999999999999px;width:1px;height:16.9px;background:#b4b4b4"></div>
<div class="a" style="left:549.8px;top:118.69999999999999px;width:9.4px;height:9.8px;background:#dadada;border:1px solid #e6e6e6;border-top-color:#a2a2a2;border-left-color:#a2a2a2"></div>
<svg style="left:563.2px;top:117.8px;overflow:hidden" width="20" height="12.8" viewBox="0 0 20 13"><rect width="20" height="13" fill="#080808"/><g filter="url(#tb)"><path d="M0.5,8.5 L1,2 L6,0.8 L12,0.5 L19.5,2 L19.5,9 L15,10 L9,9.2 L4,10.5Z" fill="#222220"/><path d="M0.8,9 L2.2,3.2 L5.5,2.2 L8.5,5.5 L6,8.5 L3,10.2Z" fill="#343432"/><path d="M5.5,1.6 L9,0.6 L13,1.8 L17,4.2 L19.5,7.5 L17.5,8.2 L14,5.6 L10.5,4.8 L8,3.6Z" fill="#4e4e4c"/><path d="M7,6.8 L10,5.4 L13.5,6.4 L16.5,8.4 L14,9.4 L10.5,8.6 L8,9.4Z" fill="#383836"/><path d="M6.5,1.8 L8.6,1 M9.6,2.4 L11.4,1.8 M12,3.4 L13.6,3 M14.4,4.6 L15.8,4.2 M16.6,6 L17.8,5.8 M10.6,3.8 l1,0.4 M8.4,6.4 l1.4,-0.4 M11.6,7 l1.6,0.4" stroke="#a4a4a0" stroke-width="0.8" fill="none"/><path d="M1.5,10.5 L6,9.2 L9,10.4 L5,12Z" fill="#1c1c1c"/></g></svg>
<div class="t" style="left:585px;top:120.19999999999999px;font-size:7.8px;color:#222;">绿</div>
<div class="t" style="left:677.5px;top:120.39999999999999px;font-size:7.5px;color:#222;transform:scaleX(0.9);transform-origin:0 0">Ctrl+4</div>
<div class="a" style="left:546px;top:131.6px;width:155px;height:1.2px;background:#a8a8a8;box-shadow:0 -0.8px 0 #c4c4c4"></div>
<div class="a" style="left:546px;top:132.29999999999998px;width:155px;height:16.9px;background:#d8d8d8"></div>
<div class="a" style="left:562px;top:132.29999999999998px;width:139px;height:16.9px;background:#dedede"></div>
<div class="a" style="left:561.3px;top:132.29999999999998px;width:1px;height:16.9px;background:#b4b4b4"></div>
<div class="a" style="left:549.8px;top:135.6px;width:9.4px;height:9.8px;background:#dadada;border:1px solid #e6e6e6;border-top-color:#a2a2a2;border-left-color:#a2a2a2"></div>
<svg style="left:563.2px;top:134.7px;overflow:hidden" width="20" height="12.8" viewBox="0 0 20 13"><rect width="20" height="13" fill="#080808"/><g filter="url(#tb)"><path d="M0.5,8.5 L1,2 L6,0.8 L12,0.5 L19.5,2 L19.5,9 L15,10 L9,9.2 L4,10.5Z" fill="#222220"/><path d="M0.8,9 L2.2,3.2 L5.5,2.2 L8.5,5.5 L6,8.5 L3,10.2Z" fill="#343432"/><path d="M5.5,1.6 L9,0.6 L13,1.8 L17,4.2 L19.5,7.5 L17.5,8.2 L14,5.6 L10.5,4.8 L8,3.6Z" fill="#4e4e4c"/><path d="M7,6.8 L10,5.4 L13.5,6.4 L16.5,8.4 L14,9.4 L10.5,8.6 L8,9.4Z" fill="#383836"/><path d="M6.5,1.8 L8.6,1 M9.6,2.4 L11.4,1.8 M12,3.4 L13.6,3 M14.4,4.6 L15.8,4.2 M16.6,6 L17.8,5.8 M10.6,3.8 l1,0.4 M8.4,6.4 l1.4,-0.4 M11.6,7 l1.6,0.4" stroke="#a4a4a0" stroke-width="0.8" fill="none"/><path d="M1.5,10.5 L6,9.2 L9,10.4 L5,12Z" fill="#1c1c1c"/></g></svg>
<div class="t" style="left:585px;top:137.1px;font-size:7.8px;color:#222;">蓝</div>
<div class="t" style="left:677.5px;top:137.29999999999998px;font-size:7.5px;color:#222;transform:scaleX(0.9);transform-origin:0 0">Ctrl+5</div>
<div class="a" style="left:546px;top:148.49999999999997px;width:155px;height:1.2px;background:#a8a8a8;box-shadow:0 -0.8px 0 #c4c4c4"></div>
<div class="a" style="left:546px;top:149.2px;width:155px;height:16.9px;background:#d8d8d8"></div>
<div class="a" style="left:562px;top:149.2px;width:139px;height:16.9px;background:#c0ecff"></div>
<div class="a" style="left:561.3px;top:149.2px;width:1px;height:16.9px;background:#b4b4b4"></div>
<div class="a" style="left:549.8px;top:152.5px;width:9.4px;height:9.8px;background:#dadada;border:1px solid #e6e6e6;border-top-color:#a2a2a2;border-left-color:#a2a2a2"></div>
<svg style="left:550.5px;top:154.2px" width="8" height="6"><path d="M0.2,3 C1.6,0.6 6.4,0.6 7.8,3 C6.4,5.4 1.6,5.4 0.2,3Z" fill="#888" stroke="#333" stroke-width="0.6"/><circle cx="4" cy="3" r="1.5" fill="#111"/></svg>
<div class="a" style="left:563.2px;top:151.6px;width:19.8px;height:12.8px;background:#050303"></div>
<div class="t" style="left:585.3px;top:154.2px;font-size:7.6px;color:#2a9fcf;transform:scaleX(0.88);transform-origin:0 0">Alpha 1</div>
<div class="t" style="left:677.5px;top:154.2px;font-size:7.5px;color:#2a9fcf;transform:scaleX(0.9);transform-origin:0 0">Ctrl+6</div>
<div class="a" style="left:546px;top:165.39999999999998px;width:155px;height:1.2px;background:#a8a8a8;box-shadow:0 -0.8px 0 #c4c4c4"></div>
<div class="a" style="left:701px;top:81.6px;width:11px;height:232.4px;background:linear-gradient(90deg,#f2f2f2,#fff 40%,#fff)"></div>
<svg style="left:703.5px;top:88px" width="6" height="3"><path d="M0,2.6 L2.5,0 L5,2.6Z" fill="#aaa"/></svg>
<svg style="left:703.5px;top:306.5px" width="6" height="3"><path d="M0,0 L2.5,2.6 L5,0Z" fill="#555"/></svg>
<div class="a" style="left:546px;top:314px;width:166px;height:12.5px;background:#d0d0d0;border-top:1px solid #9c9c9c"></div>
<svg style="left:634px;top:315px" width="78" height="11"><circle cx="4.4" cy="4.6" r="2.6" fill="#ddd" stroke="#999" stroke-width="0.8"/><rect x="18.3" y="1.2" width="8.4" height="7" fill="#999" stroke="#444" stroke-width="0.8"/><circle cx="22.5" cy="4.8" r="2" fill="#fff"/><rect x="38.8" y="1.4" width="6" height="6.6" fill="#f4f4f4" stroke="#555" stroke-width="0.8"/><rect x="40" y="4.4" width="3" height="3" fill="#555"/><path d="M56.6,2.6 h5 l-0.6,5.8 h-3.8Z" fill="#888" stroke="#333" stroke-width="0.7"/><path d="M56,2.2 h6.2 M58,1 h2.2" stroke="#333" stroke-width="0.9"/><path d="M76.5,2.5 L70.5,8.5 H76.5Z" fill="#c4c4c4"/></svg>
<div class="a" style="left:712.5px;top:54.3px;width:70.5px;height:7.6px;background:linear-gradient(#4c4c4c,#383838)"></div>
<svg style="left:729px;top:55.6px" width="6" height="5"><path d="M0,0 L2.5,2.2 L0,4.4Z M3,0 L5.5,2.2 L3,4.4Z" fill="#d8d8d8"/></svg>
<svg style="left:767px;top:55.6px" width="16" height="5"><path d="M0,0 L2.5,2.2 L0,4.4Z M3,0 L5.5,2.2 L3,4.4Z" fill="#d8d8d8"/><path d="M7.4,0 V4.6" stroke="#777" stroke-width="0.8"/><path d="M9.8,0.2 L13.8,4.4 M13.8,0.2 L9.8,4.4" stroke="#e0e0e0" stroke-width="1.1"/></svg>
<div class="a" style="left:712.8px;top:62px;width:22.7px;height:45.3px;background:#d6d6d6;border-bottom:1px solid #555"></div>
<div class="a" style="left:716px;top:64px;width:17px;height:2.2px;background:#c2c2c2"></div>
<div class="a" style="left:735.3px;top:62px;width:47.5px;height:45.3px;background:#d6d6d6;border:1px solid #5a5a5a;border-top:none;border-left:1px solid #666"></div>
<div class="a" style="left:739px;top:64px;width:41px;height:2.2px;background:#c2c2c2"></div>
<div class="a" style="left:735.3px;top:107.3px;width:47.5px;height:47.1px;background:#d6d6d6;border:1px solid #5a5a5a;border-top:none;border-left-color:#666;border-radius:0 0 2px 2px"></div>
<div class="a" style="left:739px;top:109.8px;width:41px;height:2.2px;background:#c2c2c2"></div>
<svg style="left:719px;top:72px" width="12" height="32"><rect x="3.4" y="6.6" width="5.2" height="5" fill="#222"/><rect x="4.6" y="8.8" width="2.6" height="2" fill="#fff"/><path d="M4.6,6.5 L2.6,1.6 M6,6.5 V0.8 M7.4,6.5 L9.6,2.6" stroke="#222" stroke-width="1.1"/><circle cx="9.8" cy="2.6" r="1.2" fill="#222"/><path d="M3.8,19.3 h4.6 v4.8 h2.2 v3.2 h-9 v-3.2 h2.2Z" fill="#b4b4b4" stroke="#3a3a3a" stroke-width="0.8"/><path d="M5,20v4" stroke="#eee" stroke-width="0.8"/><rect x="1.8" y="28.2" width="9" height="1.8" fill="#fff" stroke="#333" stroke-width="0.6"/><path d="M4.6,25.8 h3.2 l-1.6,1.6Z" fill="#111"/><path d="M1.2,19.6v1 M1.2,21.8v1 M1.2,24v1" stroke="#333" stroke-width="0.8"/></svg>
<svg style="left:740px;top:70px" width="14" height="80"><circle cx="7.2" cy="8.2" r="3.6" fill="#fafafa" stroke="#222" stroke-width="0.9"/><path d="M4.65,10.75 A3.6,3.6 0 0 1 9.75,5.65 Z" fill="#111"/><rect x="1.4" y="22.6" width="10.6" height="8.2" fill="#8e8e8e" stroke="#333" stroke-width="0.9"/><circle cx="6.7" cy="26.7" r="2.6" fill="#fff"/><rect x="3.2" y="49" width="2.6" height="2.2" fill="#fff" stroke="#333" stroke-width="0.6"/><rect x="3.2" y="52.2" width="2.6" height="2.2" fill="#fff" stroke="#333" stroke-width="0.6"/><rect x="3.2" y="55.4" width="2.6" height="2.2" fill="#333" stroke="#333" stroke-width="0.6"/><path d="M7.6,49.6 C10.6,49.6 10.8,53.6 8,56.4" fill="none" stroke="#333" stroke-width="1.2"/><path d="M7,48.2 l2.6,1.4 l-2.6,1.6Z" fill="#333"/><rect x="1.6" y="67.8" width="10.4" height="7.6" fill="#f0f0f0" stroke="#333" stroke-width="0.9"/><path d="M4.4,69.4 L9.6,71.6 L4.4,73.8Z" fill="#222"/></svg>
<div class="t" style="left:758px;top:74px;font-size:8px;color:#6a6a6a;">调整</div>
<div class="t" style="left:758px;top:93px;font-size:8px;color:#6a6a6a;">蒙版</div>
<div class="t" style="left:758px;top:119.5px;font-size:8px;color:#6a6a6a;">历...</div>
<div class="t" style="left:758px;top:138.5px;font-size:8px;color:#6a6a6a;">动作</div>
<div class="a" style="left:783px;top:55px;width:14px;height:11px;background:#fff"></div>
<svg style="left:783px;top:61px" width="5" height="5"><path d="M0.6,0.3 V4 H4.2 V0.3" fill="none" stroke="#2c2c2c" stroke-width="1.3"/></svg>
<div class="a" style="left:787.5px;top:55px;width:9.5px;height:551px;background:linear-gradient(90deg,#ececec,#fff 35%,#fff 80%,#f0f0f0)"></div>
<svg style="left:789.5px;top:61px" width="6" height="3"><path d="M0,2.6 L2.5,0 L5,2.6Z" fill="#aaa"/></svg>
<svg style="left:789.5px;top:597.5px" width="6" height="3"><path d="M0,0 L2.5,2.6 L5,0Z" fill="#888"/></svg>
<div class="a" style="left:26px;top:606.5px;width:771px;height:10.5px;background:#d2d2d2;border-top:1px solid #9a9a9a"></div>
<div class="a" style="left:187px;top:607px;width:601px;height:10px;background:linear-gradient(#f0f0f0,#fff 40%,#fff)"></div>
<div class="a" style="left:788px;top:607px;width:9px;height:10px;background:#d8d8d8"></div>
<div class="a" style="left:26px;top:607px;width:29.5px;height:10px;background:#fff"></div>
<div class="t" style="left:28.8px;top:609px;font-size:7.5px;color:#222;letter-spacing:-0.1px">22.77%</div>
<div class="a" style="left:57.5px;top:607px;width:12px;height:10px;background:#e0e0e0;border-left:1px solid #aaa;border-right:1px solid #aaa"></div>
<svg style="left:59.5px;top:608px" width="9" height="8"><circle cx="4" cy="4" r="3.1" fill="#fff" stroke="#666" stroke-width="0.9"/><path d="M4,4 L4,1.4 M4,4 L6.2,5.2" stroke="#333" stroke-width="0.9"/><path d="M5.4,3.6 L8,3.6 L8,6.4Z" fill="#333"/></svg>
<div class="t" style="left:94.5px;top:609px;font-size:7.4px;color:#222;letter-spacing:-0.15px">文档:17.2M/17.2M</div>
<div class="a" style="left:176px;top:607px;width:10.5px;height:10px;background:#e6e6e6;border-left:1px solid #aaa;border-right:1px solid #aaa"></div>
<svg style="left:178.5px;top:609px" width="6" height="7"><path d="M0,0 L5,3 L0,6Z" fill="#111"/></svg>
<svg style="left:190.5px;top:610px" width="4" height="5"><path d="M2.6,0 L0,2.4 L2.6,4.8Z" fill="#999"/></svg>
<svg style="left:779.5px;top:610px" width="4" height="5"><path d="M0,0 L2.6,2.4 L0,4.8Z" fill="#999"/></svg>
<div class="a" style="left:796.5px;top:55px;width:0.9px;height:562px;background:#a8a8a8"></div>
<div class="a" style="left:2px;top:616.2px;width:795px;height:0.9px;background:#a49c94"></div>
<div class="a" style="left:0px;top:617.1px;width:800px;height:1.5px;background:#ebebf0"></div>
<div class="a" id="taskbar" style="left:1px;top:618.5px;width:798px;height:20px;background:linear-gradient(#3a5a9e 0,#6888cf 6%,#5474c2 22%,#4060b2 42%,#2c449c 52%,#283e96 70%,#22368c 100%)"></div>
<div class="a" style="left:300px;top:619.5px;width:405px;height:9px;background:linear-gradient(#94b4ea,#7a9cdc 40%,#5a80c8);-webkit-mask-image:linear-gradient(90deg,transparent,#000 6%,#000 88%,transparent);mask-image:linear-gradient(90deg,transparent,#000 6%,#000 88%,transparent)"></div>
<div class="a" style="left:1px;top:618.5px;width:120px;height:20px;overflow:hidden"><div class="a" style="left:33.5px;top:1.2px;width:24px;height:24px;border-radius:50%;background:radial-gradient(circle at 50% 35%,#8cc6f6 0,#4a8ede 50%,#2458b8 80%,#123484 100%);box-shadow:0 0 0 1.6px #0a1c66"></div></div>
<svg style="left:36px;top:621px;overflow:hidden" width="22" height="17.5"><path d="M6,8 C8,4 10,4 11,7 L9,14 C8,12 6,11 4.5,12Z" fill="#e8502a"/><path d="M12,7 C14,9 16,8 17.5,5.5 L15.5,13 C14,15 12,15 10,14Z" fill="#6cc04a"/></svg>
<svg style="left:6px;top:624px" width="13" height="13"><path d="M1.6,2.2 C3,1.2 4.6,1.2 5.8,2 L5,6 C3.8,5.2 2.2,5.2 0.9,6.2Z" fill="#e8602c"/><path d="M6.8,2.4 C8.2,3.2 9.8,3.2 11.2,2.2 L10.4,6.2 C9,7.2 7.4,7.2 6,6.4Z" fill="#7cc242"/><path d="M0.7,7.2 C2,6.2 3.6,6.2 4.8,7 L4,11 C2.8,10.2 1.2,10.2 0,11.2Z" fill="#3f8fe8"/><path d="M5.8,7.4 C7.2,8.2 8.8,8.2 10.2,7.2 L9.4,11.2 C8,12.2 6.4,12.2 5,11.4Z" fill="#f8c830"/></svg>
<div class="a" style="left:1px;top:618.5px;width:120px;height:20px;overflow:hidden"><div class="t" style="left:24.5px;top:4.6px;font-size:16.5px;color:#f6f6d2;font-style:italic;font-weight:400;letter-spacing:-0.6px;text-shadow:0.6px 0.8px 0.6px #1a2c6a">开始</div></div>
<svg style="left:71px;top:624px" width="11" height="11"><circle cx="5.4" cy="5.4" r="4.8" fill="#dfeaf6" stroke="#7aa0d8" stroke-width="0.8"/><path d="M7.6,6.4 C7,8 3.4,8 3.2,5.4 C3.2,3 7.4,2.6 7.8,5.2 H4" fill="none" stroke="#2a6ab8" stroke-width="1.3"/></svg>
<svg style="left:86px;top:623px" width="13" height="13"><path d="M9.4,8 C8.6,10.4 3.6,10.6 3.2,6.8 C3,3.2 9,2.4 9.8,6.4 H4.4" fill="none" stroke="#3f9bea" stroke-width="1.9"/><path d="M1.2,11.2 C-0.4,8 6,1.2 11.8,1.6 C9,1.2 2,6 2.6,10.4Z" fill="#f0c030"/></svg>
<div class="a" style="left:122px;top:620px;width:97px;height:18px;background:linear-gradient(#1a3484,#1e3c90 45%,#16307e 55%,#152c78);border:1px solid #10245e;border-radius:2.5px;box-shadow:inset 0 1px 2px #0a1a50"></div>
<div class="a" style="left:126.5px;top:623px;width:9px;height:9px;background:linear-gradient(135deg,#3aa6f2,#0b58b0);border:0.5px solid #9cc8f0"></div>
<div class="t" style="left:128px;top:625.5px;font-size:5px;color:#06204a;font-weight:bold">Ps</div>
<div class="t" style="left:138px;top:624px;font-size:11px;color:#fff;transform:scaleX(0.94);transform-origin:0 0">Adobe Photosh...</div>
<div class="a" style="left:222px;top:620px;width:97px;height:18px;background:linear-gradient(#7d9edb,#5a82c8 46%,#253e9a 50%,#24399a);border:1px solid #2a4a9c;border-top-color:#9ab6ea;border-radius:2.5px"></div>
<svg style="left:226px;top:623.5px" width="10" height="10"><rect x="0.5" y="0.5" width="7" height="6.4" fill="#f4f4f4" stroke="#6a7a9a" stroke-width="0.7"/><rect x="3" y="3.4" width="6.4" height="5.6" fill="#dfe6f2" stroke="#4a5a7a" stroke-width="0.7"/><path d="M4.2,5.2h4M4.2,6.8h4" stroke="#345" stroke-width="0.6"/></svg>
<div class="t" style="left:237px;top:624.5px;font-size:10.5px;color:#fff;letter-spacing:-0.3px">【读书札记】...</div>
<svg style="left:695px;top:625.6px" width="13" height="9"><rect x="0.6" y="2.4" width="11" height="5.6" rx="1" fill="#e8e8e8" stroke="#333" stroke-width="0.8"/><path d="M2.4,4.2h7.4M2.4,6h7.4" stroke="#555" stroke-width="0.7"/><path d="M3,2.2 C3,0.6 8,0.6 9.4,1.6" fill="none" stroke="#ddd" stroke-width="0.7"/></svg>
<svg style="left:716px;top:627.2px" width="5" height="6"><path d="M3.8,0.4 L0.8,2.8 L3.8,5.2" fill="none" stroke="#fff" stroke-width="1.2"/></svg>
<svg style="left:726px;top:624.3px" width="34" height="12"><rect x="1" y="2" width="5.4" height="4.6" fill="#cfe0f6" stroke="#223a78" stroke-width="0.7"/><rect x="3.6" y="4.6" width="5.4" height="4.6" fill="#9ab8e8" stroke="#223a78" stroke-width="0.7"/><path d="M6.4,6.4 L10.6,10.6 M10.6,6.4 L6.4,10.6" stroke="#e81c1c" stroke-width="1.5"/><circle cx="17.4" cy="5.4" r="3.8" fill="#c8ccd6" stroke="#55607a" stroke-width="0.8"/><path d="M16,3.6 C18.4,3.2 18.8,5.4 17,6.2" fill="none" stroke="#334" stroke-width="0.9"/><path d="M14.6,10.6 L20.6,6.6" stroke="#8aa2d8" stroke-width="1.4"/><circle cx="28" cy="5.8" r="4.4" fill="#e6eef6" stroke="#6a86b8" stroke-width="0.8"/><text x="25.6" y="8.6" font-family="Liberation Sans, sans-serif" font-size="7.5" font-weight="bold" fill="#3a6a9a">a</text></svg>
<div class="t" style="left:766.2px;top:624.6px;font-size:10.5px;color:#fff;letter-spacing:0">19:45</div>
</div></body></html>
